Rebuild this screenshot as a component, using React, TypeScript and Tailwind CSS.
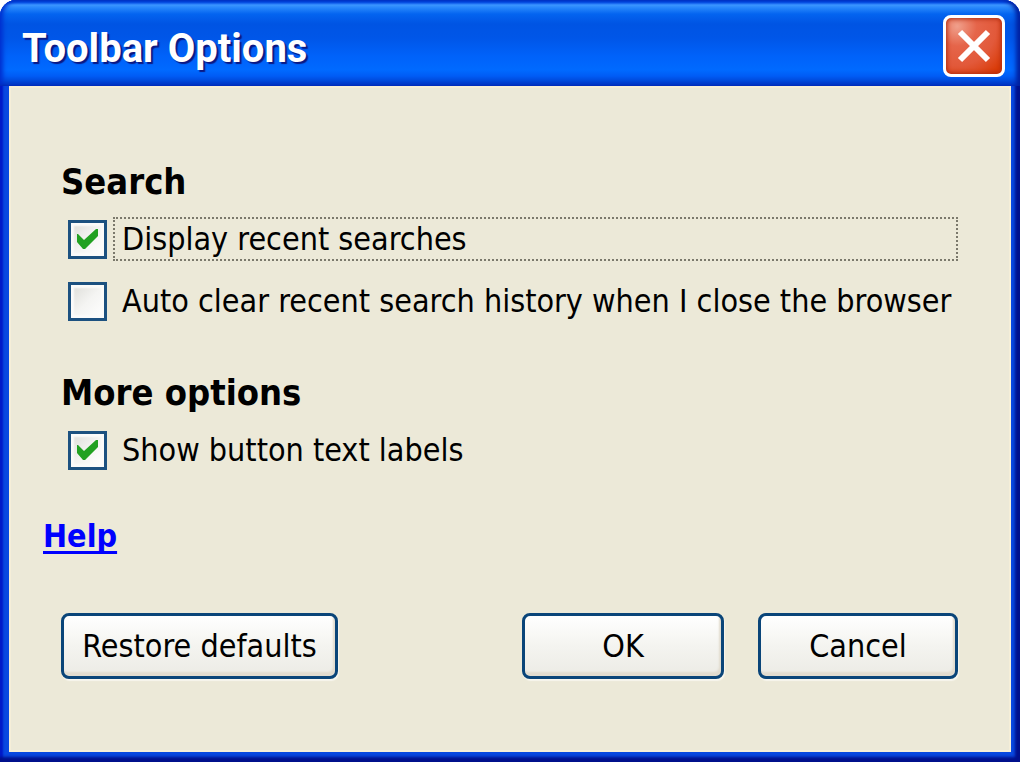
import { useState } from 'react'
import type { ReactNode } from 'react'

type OptionProps = {
  id: string
  label: string
  checked: boolean
  focused?: boolean
  onChange: (checked: boolean) => void
}

function Option({ id, label, checked, focused, onChange }: OptionProps) {
  return (
    <div className="flex items-center gap-[6px] pl-[7px]">
      <span className="grid shrink-0">
        <input
          id={id}
          type="checkbox"
          checked={checked}
          onChange={(e) => onChange(e.target.checked)}
          className="col-start-1 row-start-1 size-[39px] appearance-none border-[3px] border-[#1c5180] bg-linear-to-br from-[#dcdcd7] via-[#f4f4f2] to-white shadow-[inset_0_0_2px_3px_#fbfbfa]"
        />
        {checked && (
          <svg
            viewBox="0 0 39 39"
            className="pointer-events-none col-start-1 row-start-1 size-[39px]"
            aria-hidden="true"
          >
            <path d="M9 14 L10 14 L16 20 L28 9 L30 9 L30 16 L17 29 L15 29 L9 22 Z" fill="#21a121" />
          </svg>
        )}
      </span>
      <label
        htmlFor={id}
        className={`flex h-[44px] flex-1 items-center border-2 pl-[7px] whitespace-nowrap ${
          focused ? 'border-dotted border-[#7b796c]' : 'border-transparent'
        }`}
      >
        {label}
      </label>
    </div>
  )
}

function PushButton({ children, className }: { children: ReactNode; className: string }) {
  return (
    <button
      type="button"
      className={`h-[66px] rounded-lg border-[3px] border-[#0a4579] bg-linear-to-b from-white via-[#f4f4f0] to-[#ecebe5] whitespace-nowrap shadow-[inset_-2px_-4px_2px_#e2dccf,1px_2px_1px_#f8f6ee] ${className}`}
    >
      {children}
    </button>
  )
}

export default function App() {
  const [displayRecent, setDisplayRecent] = useState(true)
  const [autoClear, setAutoClear] = useState(false)
  const [showLabels, setShowLabels] = useState(true)

  return (
    <div className="min-h-screen bg-white">
      <main className="flex min-h-screen flex-col rounded-t-[16px] bg-[#0848e0] font-['DejaVu_Sans_Condensed','DejaVu_Sans',sans-serif] text-[32px] leading-[40px] text-black shadow-[inset_-5px_-5px_3px_#00108c,inset_3px_0_2px_#0019c8]">
        {/* title bar */}
        <header className="flex h-[86px] items-center justify-between rounded-t-[16px] bg-[linear-gradient(to_bottom,#0050ee_0,#0050ee_2px,#3c96ff_5px,#2585fb_8px,#0464f0_14px,#0054e3_24px,#0056e8_38px,#0062fa_56px,#006aff_70px,#005cf5_76px,#0045d4_82px,#003dd0_86px)] pt-[6px] pr-[15px] pl-[22px] shadow-[inset_-4px_0_4px_#0020a0,inset_3px_0_4px_#0030d0]">
          <h1 className="pt-[6px] font-[Roboto,sans-serif] text-[40px] leading-[48px] font-bold text-white [text-shadow:2px_2px_1px_#0a1883]">
            Toolbar Options
          </h1>
          <button
            type="button"
            aria-label="Close"
            className="flex size-[62px] items-center justify-center rounded-[8px] border-[3px] border-white bg-[radial-gradient(circle_at_20%_15%,#f0a08c_0%,#e5654a_30%,#e2593a_60%,#d93a06_90%)] shadow-[inset_0_0_4px_1px_#b02c10]"
          >
            <svg viewBox="0 0 34 34" className="size-[34px]" aria-hidden="true">
              <path d="M3 3 L31 31 M31 3 L3 31" stroke="#fff" strokeWidth="6" fill="none" />
            </svg>
          </button>
        </header>

        {/* client area */}
        <div className="mx-[9px] mb-[10px] flex flex-1 flex-col bg-[#ece9d8] pt-[76px] pr-[53px] pl-[52px] shadow-[inset_0_0_0_2px_#f5eed8]">
          <section>
            <h2 className="text-[36px] font-bold">Search</h2>
            <div className="mt-[15px] flex flex-col gap-[18px]">
              <Option
                id="display-recent"
                label="Display recent searches"
                checked={displayRecent}
                focused
                onChange={setDisplayRecent}
              />
              <Option
                id="auto-clear"
                label="Auto clear recent search history when I close the browser"
                checked={autoClear}
                onChange={setAutoClear}
              />
            </div>
          </section>

          <section className="mt-[50px]">
            <h2 className="text-[36px] font-bold">More options</h2>
            <div className="mt-[15px]">
              <Option
                id="show-labels"
                label="Show button text labels"
                checked={showLabels}
                onChange={setShowLabels}
              />
            </div>
          </section>

          <div className="mt-[44px] -ml-[18px]">
            <a
              href="#help"
              className="font-bold text-[#0000ff] underline decoration-[3px] underline-offset-4 [text-decoration-skip-ink:none]"
            >
              Help
            </a>
          </div>

          <div className="mt-[57px] flex justify-between">
            <PushButton className="w-[277px]">Restore defaults</PushButton>
            <div className="flex gap-[34px]">
              <PushButton className="w-[202px]">OK</PushButton>
              <PushButton className="w-[200px]">Cancel</PushButton>
            </div>
          </div>
        </div>
      </main>
    </div>
  )
}
